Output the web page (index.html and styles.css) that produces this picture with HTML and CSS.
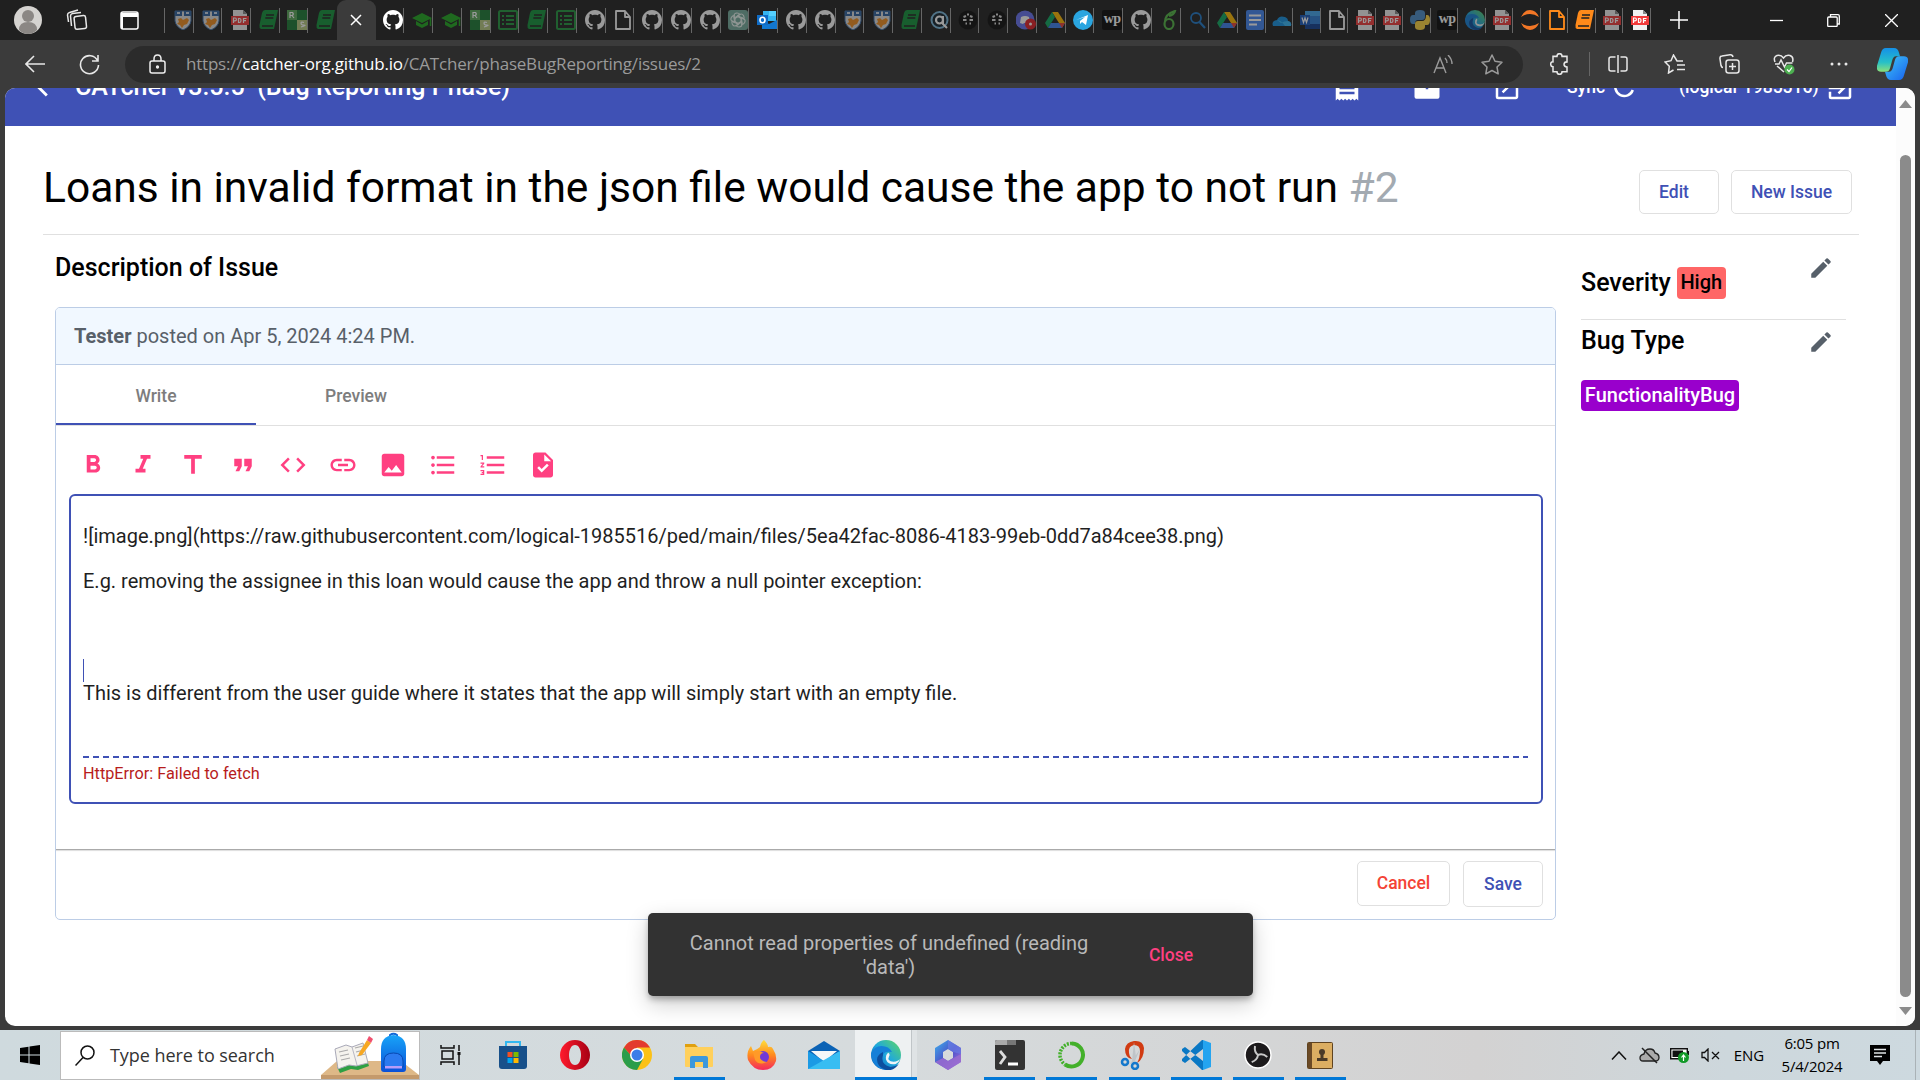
FILE: index.html
```html
<!DOCTYPE html>
<html lang="en">
<head>
<meta charset="utf-8">
<title>CATcher</title>
<link rel="stylesheet" href="styles.css">
</head>
<body>
<svg class="defs" width="0" height="0">
  <defs>
    <linearGradient id="gEdge" x1="0" y1="1" x2="1" y2="0"><stop offset="0" stop-color="#0b5cb5"/><stop offset=".5" stop-color="#1fa8dd"/><stop offset="1" stop-color="#5fd860"/></linearGradient>
    <linearGradient id="gCop1" x1="0" y1="0" x2="0" y2="1"><stop offset="0" stop-color="#1590e8"/><stop offset=".6" stop-color="#26c0c8"/><stop offset="1" stop-color="#8ae07a"/></linearGradient>
    <linearGradient id="gCop2" x1="0" y1="0" x2="1" y2="1"><stop offset="0" stop-color="#3fc8f8"/><stop offset="1" stop-color="#1860ee"/></linearGradient>
    <linearGradient id="g365" x1="0" y1="0" x2="1" y2="1"><stop offset="0" stop-color="#3fb4ee"/><stop offset=".5" stop-color="#4a50c8"/><stop offset="1" stop-color="#b07ae0"/></linearGradient>
    <linearGradient id="gFox" x1="0" y1="0" x2="0" y2="1"><stop offset="0" stop-color="#ffde3c"/><stop offset=".5" stop-color="#ff8a1e"/><stop offset="1" stop-color="#f5295c"/></linearGradient>
    <linearGradient id="gOpera" x1="0" y1="0" x2="1" y2="0"><stop offset="0" stop-color="#ff1b2d"/><stop offset="1" stop-color="#a70014"/></linearGradient>
    <linearGradient id="gBag" x1="0" y1="0" x2="0" y2="1"><stop offset="0" stop-color="#18a4f8"/><stop offset="1" stop-color="#0a50d8"/></linearGradient>
  </defs>
  <symbol id="gh" viewBox="0 0 16 16"><path d="M8 0C3.58 0 0 3.58 0 8c0 3.54 2.29 6.53 5.47 7.59.4.07.55-.17.55-.38 0-.19-.01-.82-.01-1.49-2.01.37-2.53-.49-2.69-.94-.09-.23-.48-.94-.82-1.13-.28-.15-.68-.52-.01-.53.63-.01 1.08.58 1.23.82.72 1.21 1.87.87 2.33.66.07-.52.28-.87.51-1.07-1.78-.2-3.64-.89-3.64-3.95 0-.87.31-1.59.82-2.15-.08-.2-.36-1.02.08-2.12 0 0 .67-.21 2.2.82.64-.18 1.32-.27 2-.27s1.36.09 2 .27c1.53-1.04 2.2-.82 2.2-.82.44 1.1.16 1.92.08 2.12.51.56.82 1.27.82 2.15 0 3.07-1.87 3.75-3.65 3.95.29.25.54.73.54 1.48 0 1.07-.01 1.93-.01 2.2 0 .21.15.46.55.38A8.01 8.01 0 0 0 16 8c0-4.42-3.58-8-8-8z" fill="#fff"/></symbol>
  <symbol id="crest" viewBox="0 0 20 20"><path d="M2 1h16v10q-1 6-8 9-7-3-8-9z" fill="#ddd"/><path d="M2 1h7v5H2zM11 1h7v5h-7z" fill="#2b5f9c"/><path d="M4 3h3M13 3h3" stroke="#fff" stroke-width="1.5"/><path d="M5 9l3-1 2 2 4-2 2 2-2 4-3 1-2 3-2-3-3-1 2-2z" fill="#f08c1e"/><path d="M2 1h16v10q-1 6-8 9-7-3-8-9z" fill="none" stroke="#3a6ca5"/></symbol>
  <symbol id="pdf" viewBox="0 0 20 20"><path d="M3 0h10l4 4v16H3z" fill="#f2f2f2"/><path d="M13 0v4h4z" fill="#888"/><path d="M1 6h18v9H1z" fill="#f23b3b"/><path d="M3.500 13V8h1.500a1.400 1.400 0 0 1 0 2.800H3.500M8.500 8.500v4h1q1.500 0 1.500-2t-1.500-2zM13.500 13V8.500h3M13.500 10.700h2.500" fill="none" stroke="#fff" stroke-width="1.200"/></symbol>
  <symbol id="book" viewBox="0 0 20 20"><path d="M6 0h13l-4 19H2q-2-1-1.500-4L3 3q.8-3 3-3z" fill="currentColor"/><path d="M7 5h8M6.300 8h8M3 16h11" stroke="#222" stroke-width="1.400"/></symbol>
  <symbol id="rs" viewBox="0 0 20 20"><path d="M0 0h10v10H0z" fill="#5aa85a"/><path d="M10 0h10v10H10z" fill="#1c7a34"/><path d="M0 10h10v10H0z" fill="#1c7a34"/><path d="M10 10h10v10H10z" fill="#b5c880"/><path d="M3 8V2.500h2.500q1.500 1.500 0 3H3M5 5.500L7 8M17 12.500q-3-1-3 .8t3 1.800-3 1.900" fill="none" stroke="#fff" stroke-width="1.200"/></symbol>
  <symbol id="grad" viewBox="0 0 20 20"><path d="M0 8l10-5 10 5-10 5zM4 11l6 3.500L16 11v4l-6 3-6-3z" fill="#1fa51f"/><path d="M18.500 8v8" stroke="#1fa51f" stroke-width="1.500"/></symbol>
  <symbol id="list" viewBox="0 0 20 20"><rect x="1" y="1" width="18" height="18" rx="1.500" fill="none" stroke="#21963e" stroke-width="2"/><path d="M4 6h2M8 6h8M4 10h2M8 10h8M4 14h2M8 14h8" stroke="#21963e" stroke-width="1.800"/></symbol>
  <symbol id="file" viewBox="0 0 20 20"><path d="M3 1h9l5 6v12H3zM12 1v6h5" fill="none" stroke="currentColor" stroke-width="1.800" stroke-linejoin="round"/></symbol>
  <symbol id="gpt" viewBox="0 0 20 20"><rect width="20" height="20" rx="3" fill="#74aa9c"/><g fill="none" stroke="#e8f5f0" stroke-width="1.100"><path d="M6 8.500V6q0-3 3-3 2 0 3 1.500L7 7.500V12"/><path d="M6 8.500V6q0-3 3-3 2 0 3 1.500L7 7.500V12" transform="rotate(60 10 10)"/><path d="M6 8.500V6q0-3 3-3 2 0 3 1.500L7 7.500V12" transform="rotate(120 10 10)"/><path d="M6 8.500V6q0-3 3-3 2 0 3 1.500L7 7.500V12" transform="rotate(180 10 10)"/><path d="M6 8.500V6q0-3 3-3 2 0 3 1.500L7 7.500V12" transform="rotate(240 10 10)"/><path d="M6 8.500V6q0-3 3-3 2 0 3 1.500L7 7.500V12" transform="rotate(300 10 10)"/></g></symbol>
  <symbol id="outlook" viewBox="0 0 20 20"><path d="M6 1h13v10H6z" fill="#35b4f0"/><path d="M12 1h7v5h-7z" fill="#55d0ff"/><path d="M5 10l7 4 8-4v9H5z" fill="#1277cf"/><path d="M0 5h11v10H0z" fill="#0f6cc6"/><ellipse cx="5.500" cy="10" rx="2.500" ry="2.800" fill="none" stroke="#fff" stroke-width="1.600"/></symbol>
  <symbol id="aq" viewBox="0 0 20 20"><circle cx="9.500" cy="10" r="8" fill="#10202c" stroke="#7ab8dc" stroke-width="2"/><circle cx="9.500" cy="10" r="3.500" fill="none" stroke="#fff" stroke-width="2.200"/><path d="M13 6v8l4 4" stroke="#fff" stroke-width="2" fill="none"/></symbol>
  <symbol id="dark" viewBox="0 0 20 20"><circle cx="10" cy="10" r="9.500" fill="#0c0c0c"/><path d="M5.500 7l2.500-1m4 0l2.500 1M5 10h3.500m3 0H15M7.500 13.500h1.500m2.500 0H13M9 4.500h2" stroke="#ddd" stroke-width="2"/></symbol>
  <symbol id="discord" viewBox="0 0 20 20"><circle cx="9" cy="10" r="9.500" fill="#6671f0"/><path d="M5 7q4-2 8 0l1 6-3 1-1-1H8l-1 1-3-1z" fill="#fff"/><circle cx="14.500" cy="14" r="5.500" fill="#e21f26"/><circle cx="14.500" cy="14" r="1.500" fill="#fff"/></symbol>
  <symbol id="drive" viewBox="0 0 20 20"><path d="M7 2h6l7 11h-6z" fill="#ffba00"/><path d="M7 2l3 5-7 11-3-5z" fill="#0da960"/><path d="M6 13h14l-3 5H3z" fill="#3d7ff0"/><path d="M14 13h6l-3 5z" fill="#ea4335"/></symbol>
  <symbol id="tg" viewBox="0 0 20 20"><circle cx="10" cy="10" r="10" fill="#2aa5e0"/><path d="M3 10l12-5-2 10-4-3-2 2v-3l5-4" fill="#fff"/></symbol>
  <symbol id="onedrive" viewBox="0 0 20 20"><path d="M1 16q-2-5 4-6 2-5 8-3 3 1 3 4 4 1 3 5z" fill="#1490df"/><path d="M5 10q4 0 8 6h6q1-4-3-5-4 0-7 2z" fill="#35b5f5"/></symbol>
  <symbol id="search" viewBox="0 0 20 20"><circle cx="8" cy="8" r="5" fill="none" stroke="currentColor" stroke-width="1.800"/><path d="M11.500 12L17 18" stroke="currentColor" stroke-width="2.200"/></symbol>
  <symbol id="leaf" viewBox="0 0 20 20"><ellipse cx="9" cy="14" rx="4.500" ry="5" fill="none" stroke="#52b545" stroke-width="2.200"/><path d="M5 12Q5 4 15 1q-1 4-6 5" fill="none" stroke="#52b545" stroke-width="2.200"/></symbol>
  <symbol id="doc" viewBox="0 0 20 20"><rect x="1" width="18" height="20" rx="2" fill="#4285f4"/><path d="M4 5.500h12M4 10h12M4 14.500h8" stroke="#fff" stroke-width="1.800"/></symbol>
  <symbol id="word" viewBox="0 0 20 20"><path d="M5 1h15v18H5z" fill="#2b7cd3"/><path d="M5 1h15v5H5z" fill="#41a5ee"/><path d="M5 14h15v5H5z" fill="#103f91"/><path d="M0 5h10v10H0z" fill="#185abd"/><path d="M2 7.500l1.500 5L5 8l1.500 4.500 1.500-5" fill="none" stroke="#fff" stroke-width="1.200"/></symbol>
  <symbol id="py" viewBox="0 0 20 20"><path d="M5 9V3q0-3 5-3t5 3v4q0 3-3 3H8q-3 0-3 4H3q-3 0-3-4.500T3 5h7" fill="#4a8cc8"/><path d="M15 11v6q0 3-5 3t-5-3v-3q0-3 3-3h4q4 0 4-6h1q3 0 3 5t-3 5h-7" fill="#ffd540"/></symbol>
  <symbol id="edge" viewBox="0 0 20 20"><circle cx="10" cy="10" r="10" fill="url(#gEdge)"/><path d="M0 9q2-5 7-5 5 0 7 4-5-1-6 2-2 6 4 10Q1 20 0 9z" fill="#1580d8"/><path d="M8 10q-2 6 5 8 3 0 5.500-2Q15 21 10 20 4 18 4 13q0-3 4-5z" fill="#0d4f9e"/><path d="M11.500 8.500q1.500 1 .5 2.500-1.500 3 3 3.500 3 0 5-2.500-1.500 3-3.500 4-5 1-6.500-3-.5-3 1.500-4.500z" fill="#eef4f8"/></symbol>
  <symbol id="jup" viewBox="0 0 20 20"><path d="M1 7Q4 0 10 0t9 7q-9-6-18 0zM1 13q3 7 9 7t9-7q-9 6-18 0z" fill="#f37726"/></symbol>
  <symbol id="pencil" viewBox="0 0 24 24"><path d="M3 17.250V21h3.750L17.810 9.940l-3.750-3.750L3 17.250zM20.710 7.040a.996.996 0 0 0 0-1.410l-2.340-2.340a.996.996 0 0 0-1.410 0l-1.830 1.830 3.750 3.750 1.830-1.830z" fill="#57606a"/></symbol>
</svg>

<div class="screen">
  <header class="tabstrip">
    <div class="slot w56 lead"><svg width="28" height="28" viewBox="0 0 28 28"><circle cx="14" cy="14" r="14" fill="#d5d3d0"/><circle cx="14" cy="10" r="6" fill="#8b8784"/><path d="M5 24q0-8 9-8t9 8q-4 4-9 4t-9-4z" fill="#8b8784"/></svg></div>
    <div class="slot w48"><svg width="22" height="22" viewBox="0 0 22 22" fill="none" stroke="#e8e8e8" stroke-width="1.500"><rect x="8.500" y="7" width="11.500" height="13" rx="2" transform="rotate(-6 14 13)"/><path d="M5.500 17L4.500 7q0-2 2-2.500L15 3.500M2.500 13L1.500 6q0-2 2-2.500L12 1"/></svg></div>
    <div class="slot w56"><svg width="19" height="19" viewBox="0 0 19 19"><rect x="1" y="1" width="17" height="17" rx="2" fill="none" stroke="#fff" stroke-width="1.500"/><path d="M1 2h17v4H1zM1 6h2v12H1z" fill="#fff"/></svg></div>
    <div class="tabs first">
      <div class="tab"><svg><use href="#crest"/></svg></div>
      <div class="tab"><svg><use href="#crest"/></svg></div>
      <div class="tab"><svg><use href="#pdf"/></svg></div>
      <div class="tab green"><svg><use href="#book"/></svg></div>
      <div class="tab"><svg><use href="#rs"/></svg></div>
      <div class="tab green bare"><svg><use href="#book"/></svg></div>
    </div>
    <div class="active"><svg width="12" height="12" viewBox="0 0 12 12"><path d="M1 1l10 10M11 1L1 11" stroke="#fff" stroke-width="1.500"/></svg></div>
    <div class="tabs">
      <div class="tab on"><svg><use href="#gh"/></svg></div>
      <div class="tab"><svg><use href="#grad"/></svg></div>
      <div class="tab"><svg><use href="#grad"/></svg></div>
      <div class="tab"><svg><use href="#rs"/></svg></div>
      <div class="tab"><svg><use href="#list"/></svg></div>
      <div class="tab green"><svg><use href="#book"/></svg></div>
      <div class="tab"><svg><use href="#list"/></svg></div>
      <div class="tab"><svg><use href="#gh"/></svg></div>
      <div class="tab"><svg><use href="#file"/></svg></div>
      <div class="tab"><svg><use href="#gh"/></svg></div>
      <div class="tab"><svg><use href="#gh"/></svg></div>
      <div class="tab"><svg><use href="#gh"/></svg></div>
      <div class="tab"><svg><use href="#gpt"/></svg></div>
      <div class="tab on"><svg><use href="#outlook"/></svg></div>
      <div class="tab"><svg><use href="#gh"/></svg></div>
      <div class="tab"><svg><use href="#gh"/></svg></div>
      <div class="tab"><svg><use href="#crest"/></svg></div>
      <div class="tab"><svg><use href="#crest"/></svg></div>
      <div class="tab green"><svg><use href="#book"/></svg></div>
      <div class="tab"><svg><use href="#aq"/></svg></div>
      <div class="tab"><svg><use href="#dark"/></svg></div>
      <div class="tab"><svg><use href="#dark"/></svg></div>
      <div class="tab"><svg><use href="#discord"/></svg></div>
      <div class="tab"><svg><use href="#drive"/></svg></div>
      <div class="tab on"><svg><use href="#tg"/></svg></div>
      <div class="tab"><span class="wp">wp</span></div>
      <div class="tab"><svg><use href="#gh"/></svg></div>
      <div class="tab"><svg><use href="#leaf"/></svg></div>
      <div class="tab blue"><svg><use href="#search"/></svg></div>
      <div class="tab"><svg><use href="#drive"/></svg></div>
    </div>
    <div class="tabs narrow">
      <div class="tab"><svg><use href="#doc"/></svg></div>
      <div class="tab"><svg><use href="#onedrive"/></svg></div>
      <div class="tab"><svg><use href="#word"/></svg></div>
      <div class="tab"><svg><use href="#file"/></svg></div>
      <div class="tab"><svg><use href="#pdf"/></svg></div>
      <div class="tab"><svg><use href="#pdf"/></svg></div>
      <div class="tab"><svg><use href="#py"/></svg></div>
      <div class="tab"><span class="wp">wp</span></div>
      <div class="tab"><svg><use href="#edge"/></svg></div>
      <div class="tab"><svg><use href="#pdf"/></svg></div>
      <div class="tab on"><svg><use href="#jup"/></svg></div>
      <div class="tab on orange"><svg><use href="#file"/></svg></div>
      <div class="tab on orange"><svg><use href="#book"/></svg></div>
      <div class="tab"><svg><use href="#pdf"/></svg></div>
      <div class="tab on"><svg><use href="#pdf"/></svg></div>
    </div>
    <div class="slot w56"><svg width="18" height="18" viewBox="0 0 18 18"><path d="M9 0v18M0 9h18" stroke="#fff" stroke-width="1.500"/></svg></div>
    <div class="winctl">
      <div class="slot w57"><svg width="13" height="13" viewBox="0 0 13 13"><path d="M0 6.500h13" stroke="#fff" stroke-width="1.300"/></svg></div>
      <div class="slot w57"><svg width="13" height="13" viewBox="0 0 13 13" fill="none" stroke="#fff" stroke-width="1.300"><rect x=".7" y="3" width="9.500" height="9.500" rx="1"/><path d="M3.500 3V.700H11q1.300 0 1.300 1.300v8H10"/></svg></div>
      <div class="slot w57"><svg width="13" height="13" viewBox="0 0 13 13"><path d="M0 0l13 13M13 0L0 13" stroke="#fff" stroke-width="1.300"/></svg></div>
    </div>
  </header>

  <div class="navbar">
    <div class="slot w55 lead7"><svg width="20" height="18" viewBox="0 0 20 18" fill="none" stroke="#e8e8e8" stroke-width="1.600"><path d="M20 9H1M9 1L1 9l8 8"/></svg></div>
    <div class="slot w55"><svg width="21" height="21" viewBox="0 0 21 21" fill="none" stroke="#e8e8e8" stroke-width="1.600"><path d="M18.500 6.500A9 9 0 1 0 19.500 11M19 1v6h-6"/></svg></div>
    <div class="address">
      <svg width="17" height="20" viewBox="0 0 17 20" fill="none" stroke="#eee" stroke-width="1.500"><rect x="1" y="7" width="15" height="12" rx="2"/><path d="M5 7V5q0-4 3.500-4T12 5v2"/><circle cx="8.500" cy="13" r=".9" fill="#eee"/></svg>
      <span class="url">https://<b>catcher-org.github.io</b>/CATcher/phaseBugReporting/issues/2</span>
      <svg class="read" width="20" height="19" viewBox="0 0 20 19" fill="none" stroke="#9a9a9a" stroke-width="1.400"><path d="M1 18L7 3l6 15M3 13h8M12 3q2 2 2 5M15 0q4 4 4 9"/></svg>
      <svg width="22" height="21" viewBox="0 0 22 21" fill="none" stroke="#9a9a9a" stroke-width="1.500" stroke-linejoin="round"><path d="M11 1l3 6.300 7 .9-5 4.800 1.200 6.800L11 16.500l-6.200 3.300L6 13 1 8.200l7-.9z"/></svg>
    </div>
    <div class="navicons">
      <div class="slot w55"><svg width="20" height="22" viewBox="0 0 20 20" preserveAspectRatio="none" fill="none" stroke="#e8e8e8" stroke-width="1.500"><path d="M3 3h4q0-2.300 2.500-2.300T12 3h5v5q-3 0-3 2.300t3 2.400V17h-5q0 2.300-2.500 2.300T7 17H3v-4.500q-2.300 0-2.300-2.300T3 8z"/></svg></div>
      <i class="vline"></i>
      <div class="slot w56"><svg width="20" height="18" viewBox="0 0 20 18" fill="none" stroke="#e8e8e8" stroke-width="1.500"><path d="M7.500 2H3Q1 2 1 4v10q0 2 2 2h4.500M12.500 2H17q2 0 2 2v10q0 2-2 2h-4.500M10 0v18"/></svg></div>
      <div class="slot w56"><svg width="21" height="20" viewBox="0 0 21 20" fill="none" stroke="#e8e8e8" stroke-width="1.500"><path d="M19 7h-6L9.500 1 7 6.700 1 8l4.300 4.300L4.500 19 9.500 16M13 11h8M13 15.500h8"/></svg></div>
      <div class="slot w55"><svg width="21" height="20" viewBox="0 0 21 20" fill="none" stroke="#e8e8e8" stroke-width="1.500"><rect x="7" y="6" width="13" height="13" rx="2.500"/><path d="M13.500 9v7M10 12.500h7M4 13.500q-1.500 0-2-2L1 5q-.3-3 2-3l8-1.200q2.500-.3 3 2.200"/></svg></div>
      <div class="slot w54"><svg width="22" height="21" viewBox="0 0 22 21" fill="none" stroke="#e8e8e8" stroke-width="1.500"><path d="M2 8Q0 3 4 1.500 8 .5 10.500 4 13 .5 17 1.500 21 3 19.500 8M2 10h4l2-4 3.500 7 2-4h6M4 12l7 6"/><circle cx="16.500" cy="15.500" r="5" fill="#4caf50" stroke="none"/><path d="M14 15.500l2 2 3-4" stroke="#fff" stroke-width="1.200"/></svg></div>
      <div class="slot w55"><svg width="18" height="4" viewBox="0 0 18 4" fill="#e8e8e8"><circle cx="2" cy="2" r="1.500"/><circle cx="9" cy="2" r="1.500"/><circle cx="16" cy="2" r="1.500"/></svg></div>
      <div class="slot w53"><svg width="31" height="32" viewBox="0 0 31 27" preserveAspectRatio="none"><path d="M9 0h8q4 0 5 4l1 3h-4q-3 0-4 4l-2 6q-1 3-4 3H4q-5 0-4-5L4 4q1-4 5-4z" fill="url(#gCop1)"/><path d="M22 27h-8q-4 0-5-4l-1-3h4q3 0 4-4l2-6q1-3 4-3h5q5 0 4 5l-4 11q-1 4-5 4z" fill="url(#gCop2)"/></svg></div>
    </div>
  </div>

  <main class="viewport">
    <div class="app">
      <div class="appbar">
        <svg class="chev" width="34" height="34" viewBox="0 0 24 24" fill="#fff"><path d="M15.410 7.410L14 6l-6 6 6 6 1.410-1.410L10.830 12z"/></svg>
        <span class="brand">CATcher v3.5.5&nbsp; (Bug Reporting Phase)</span>
        <div class="slot w80"><svg width="30" height="30" viewBox="0 0 24 24" fill="#fff"><path d="M18 17H6v-2h12v2zm0-4H6v-2h12v2zm0-4H6V7h12v2zM3 22l1.500-1.500L6 22l1.500-1.500L9 22l1.500-1.500L12 22l1.500-1.500L15 22l1.500-1.500L18 22l1.500-1.500L21 22V2l-1.500 1.500L18 2l-1.500 1.500L15 2l-1.500 1.500L12 2l-1.500 1.500L9 2 7.500 3.500 6 2 4.500 3.500 3 2v20z"/></svg></div>
        <div class="slot w80"><svg width="30" height="30" viewBox="0 0 24 24" fill="#fff"><path d="M20 6h-4V4q0-2-2-2h-4Q8 2 8 4v2H4L2 8v11q0 1.500 1.500 1.500h17q1.500 0 1.500-1.500V8zm-6 0h-4V4h4zm-1 7h-2v-2h2z"/></svg></div>
        <div class="slot w80"><svg width="30" height="30" viewBox="0 0 24 24" fill="#fff"><path d="M19 19H5V5h7V3H5a2 2 0 0 0-2 2v14a2 2 0 0 0 2 2h14c1.100 0 2-.9 2-2v-7h-2v7zM14 3v2h3.590l-9.830 9.830 1.410 1.410L19 6.410V10h2V3h-7z"/></svg></div>
        <span class="sync">Sync</span>
        <svg class="ring" width="24" height="24" viewBox="0 0 24 24" fill="none" stroke="#fff" stroke-width="2.500"><path d="M18 4A9 9 0 1 0 20.800 14"/></svg>
        <span class="user">(logical-1985516)</span>
        <svg width="30" height="30" viewBox="0 0 24 24" fill="#fff"><path d="M10.090 15.590L11.500 17l5-5-5-5-1.410 1.410L12.670 11H3v2h9.670l-2.580 2.590zM19 3H5a2 2 0 0 0-2 2v4h2V5h14v14H5v-4H3v4a2 2 0 0 0 2 2h14c1.100 0 2-.9 2-2V5a2 2 0 0 0-2-2z"/></svg>
      </div>

      <div class="titlebar">
        <h1>Loans in invalid format in the json file would cause the app to not run <span>#2</span></h1>
        <button class="btn edit">Edit</button>
        <button class="btn new">New Issue</button>
      </div>

      <div class="columns">
        <section class="issue">
          <h2>Description of Issue</h2>
          <div class="card">
            <div class="cardhead"><b>Tester</b> posted on Apr 5, 2024 4:24 PM.</div>
            <div class="mdtabs"><div class="mdtab sel">Write</div><div class="mdtab">Preview</div></div>
            <div class="tools">
              <svg viewBox="0 0 24 24"><path d="M15.600 10.790c.97-.67 1.650-1.770 1.650-2.790 0-2.260-1.750-4-4-4H7v14h7.040c2.090 0 3.710-1.700 3.710-3.790 0-1.520-.86-2.820-2.150-3.420zM10 6.500h3c.83 0 1.500.67 1.500 1.500s-.67 1.500-1.500 1.500h-3v-3zm3.500 9H10v-3h3.500c.83 0 1.500.67 1.500 1.500s-.67 1.500-1.500 1.500z"/></svg>
              <svg viewBox="0 0 24 24"><path d="M10 4v3h2.210l-3.420 8H6v3h8v-3h-2.210l3.420-8H18V4z"/></svg>
              <svg viewBox="0 0 24 24"><path d="M5 4v3h5.500v12h3V7H19V4z"/></svg>
              <svg viewBox="0 0 24 24"><path d="M6 17h3l2-4V7H5v6h3zm8 0h3l2-4V7h-6v6h3z"/></svg>
              <svg viewBox="0 0 24 24"><path d="M9.400 16.600L4.800 12l4.600-4.600L8 6l-6 6 6 6 1.400-1.400zm5.200 0l4.600-4.600-4.600-4.600L16 6l6 6-6 6-1.400-1.400z"/></svg>
              <svg viewBox="0 0 24 24"><path d="M3.900 12c0-1.710 1.390-3.100 3.100-3.100h4V7H7c-2.760 0-5 2.240-5 5s2.240 5 5 5h4v-1.900H7c-1.710 0-3.100-1.390-3.100-3.100zM8 13h8v-2H8v2zm9-6h-4v1.900h4c1.710 0 3.100 1.390 3.100 3.100s-1.390 3.100-3.100 3.100h-4V17h4c2.760 0 5-2.240 5-5s-2.240-5-5-5z"/></svg>
              <svg viewBox="0 0 24 24"><path d="M21 19V5c0-1.100-.9-2-2-2H5c-1.100 0-2 .9-2 2v14c0 1.100.9 2 2 2h14c1.100 0 2-.9 2-2zM8.500 13.500l2.500 3.010L14.500 12l4.500 6H5l3.500-4.500z"/></svg>
              <svg viewBox="0 0 24 24"><path d="M4 10.500c-.83 0-1.500.67-1.500 1.500s.67 1.500 1.500 1.500 1.500-.67 1.500-1.500-.67-1.500-1.500-1.500zm0-6c-.83 0-1.500.67-1.500 1.500S3.170 7.500 4 7.500 5.500 6.830 5.500 6 4.830 4.500 4 4.500zm0 12c-.83 0-1.500.68-1.500 1.500s.68 1.500 1.500 1.500 1.500-.68 1.500-1.500-.67-1.500-1.500-1.500zM7 19h14v-2H7v2zm0-6h14v-2H7v2zm0-8v2h14V5H7z"/></svg>
              <svg viewBox="0 0 24 24"><path d="M2 17h2v.5H3v1h1v.5H2v1h3v-4H2v1zm1-9h1V4H2v1h1v3zm-1 3h1.800L2 13.100v.9h3v-1H3.200L5 10.900V10H2v1zm5-6v2h14V5H7zm0 14h14v-2H7v2zm0-6h14v-2H7v2z"/></svg>
              <svg viewBox="0 0 24 24"><path d="M14 2H6c-1.100 0-2 .9-2 2v16c0 1.100.9 2 2 2h12c1.100 0 2-.9 2-2V8l-6-6zm-3.060 16L7.400 14.460l1.410-1.410 2.120 2.120 4.240-4.240 1.410 1.410L10.940 18zM13 9V3.500L18.500 9H13z"/></svg>
            </div>
            <div class="editor">
              <div class="text"><p>![image.png](https://raw.githubusercontent.com/logical-1985516/ped/main/files/5ea42fac-8086-4183-99eb-0dd7a84cee38.png)</p><p></p><p>E.g. removing the assignee in this loan would cause the app and throw a null pointer exception:</p><p></p><p></p><p></p><p class="caret"></p><p>This is different from the user guide where it states that the app will simply start with an empty file.</p></div>
              <div class="dash"></div>
              <div class="err">HttpError: Failed to fetch</div>
            </div>
            <div class="actions"><button class="btn cancel">Cancel</button><button class="btn save">Save</button></div>
          </div>
        </section>
        <aside>
          <div class="severity"><h3>Severity</h3><span class="chip high">High</span><svg><use href="#pencil"/></svg></div>
          <div class="bugtype"><h3>Bug Type</h3><svg><use href="#pencil"/></svg></div>
          <span class="chip func">FunctionalityBug</span>
        </aside>
      </div>
    </div>
    <div class="scrollbar">
      <svg width="13" height="8" viewBox="0 0 13 8"><path d="M6.500 0L13 8H0z" fill="#8b8b8b"/></svg>
      <div class="thumb"></div>
      <svg width="13" height="8" viewBox="0 0 13 8"><path d="M6.500 8L13 0H0z" fill="#8b8b8b"/></svg>
    </div>
    <div class="snack"><p>Cannot read properties of undefined (reading 'data')</p><b>Close</b></div>
  </main>

  <footer class="taskbar">
    <div class="slot w60"><svg width="20" height="20" viewBox="0 0 20 20"><path d="M0 3l8.500-1.200v7.700H0zM9.500 1.600L20 0v9.500H9.500zM0 10.500h8.500v7.700L0 17zM9.500 10.500H20V20L9.500 18.400z"/></svg></div>
    <div class="find">
      <svg width="20" height="21" viewBox="0 0 20 21" fill="none" stroke="#111" stroke-width="1.500"><circle cx="12.500" cy="7.500" r="6.500"/><path d="M8 12.500L.5 20.500"/></svg>
      <span>Type here to search</span>
      <svg class="art" width="98" height="48" viewBox="0 0 98 48"><path d="M16 30h64l18 14v4H0v-4z" fill="#deb887"/><path d="M0 44h98v4H0z" fill="#c49a6c"/><path d="M16 36l3 6 11-4 7 1 11-4-2-6z" fill="#2ea043"/><path d="M14 18l11-4 6 2 11-4 5 20-12 3-7-1-11 4z" fill="#f5f3ee" stroke="#a9a9b8"/><path d="M31 16l5 18" stroke="#b8b8c4"/><path d="M18 21l9-2m-8 6l9-2m-8 6l9-2m5-10l8-2m-7 6l8-2m-7 6l8-2" stroke="#aaa" stroke-width="1.200"/><path d="M38 22l8-13 4 3-9 12-4 1z" fill="#f7a823"/><path d="M46 9l2-4 4 3-2 4z" fill="#f0506e"/><path d="M69 6V4q3.500-2.500 7 0v2" fill="none" stroke="#1268d8" stroke-width="2"/><path d="M60 18q0-13 12.500-14Q85 5 85 18v20q0 3-3 3H63q-3 0-3-3z" fill="url(#gBag)"/><path d="M63 30q0-8 9.500-8t9.500 8v6H63z" fill="#2b7af0" stroke="#0848b0"/><path d="M64 35h17v2.500H64z" fill="#b89cf8"/></svg>
    </div>
    <div class="apps">
      <div class="app-ic"><svg width="22" height="20" viewBox="0 0 22 20" fill="none" stroke="#111" stroke-width="1.500"><path d="M1 0v3h13V0M1 20v-3h13v3M2 6h11v8H2zM19 0v6M19 10v10"/><path d="M17.500 7h3v3h-3z" fill="#111" stroke="none"/></svg></div>
      <div class="app-ic"><svg width="30" height="30" viewBox="0 0 30 30"><path d="M8 7V2h14v5" fill="none" stroke="#32b8f0" stroke-width="2"/><path d="M1 6h28v20q0 3-3 3H4q-3 0-3-3z" fill="#17508a"/><path d="M9.500 12h5v5h-5z" fill="#f25022"/><path d="M15.500 12h5v5h-5z" fill="#7fba00"/><path d="M9.500 18h5v5h-5z" fill="#00a4ef"/><path d="M15.500 18h5v5h-5z" fill="#ffb900"/></svg></div>
      <div class="app-ic"><svg width="30" height="30" viewBox="0 0 30 30"><path d="M15 0a15 15 0 1 0 0 30 15 15 0 1 0 0-30zm0 5c4 0 6 5 6 10s-2 10-6 10-6-5-6-10 2-10 6-10z" fill="url(#gOpera)"/></svg></div>
      <div class="app-ic"><svg width="30" height="30" viewBox="0 0 30 30"><circle cx="15" cy="15" r="15" fill="#fbc116"/><path d="M2 7.500A15 15 0 0 1 28 7.500H15L10 17z" fill="#e33b2e"/><path d="M2 7.500A15 15 0 0 0 15 30l6-11-10-1z" fill="#2a9d4a"/><circle cx="15" cy="15" r="7" fill="#fff"/><circle cx="15" cy="15" r="5.500" fill="#3c7de8"/></svg></div>
      <div class="app-ic run"><svg width="28" height="26" viewBox="0 0 28 26"><path d="M0 2h10l3 3h-3v4H0z" fill="#e0a010"/><path d="M0 5h28v19q0 1-1 1H1q-1 0-1-1z" fill="#ffd05c"/><path d="M5 26V16q0-2 2-2h14q2 0 2 2v10h-5v-6h-8v6z" fill="#3c98dc"/></svg></div>
      <div class="app-ic"><svg width="30" height="30" viewBox="0 0 30 30"><path d="M17 0q4 4 4 7 4-1 5 2 4 6 3 12-3 9-13 9T1 20Q-1 12 4 6l2 5q5-2 7-4 1-5 4-7z" fill="url(#gFox)"/><circle cx="16" cy="17" r="6" fill="#7139d8"/><path d="M6 12q6-2 11 1-4 0-4 4t7 5q-8 4-12-2z" fill="#ff9a28"/></svg></div>
      <div class="app-ic"><svg width="32" height="30" viewBox="0 0 32 30"><path d="M0 11L16 1l16 10v18H0z" fill="#0b62b5"/><path d="M3 11h26L16 22z" fill="#f5f7f9"/><path d="M0 11l16 10 16-10v18H0z" fill="#1b9ae5"/><path d="M32 29H0L32 11z" fill="#38bdf2"/></svg></div>
      <div class="app-ic current"><svg width="30" height="30"><use href="#edge"/></svg></div>
      <div class="app-ic"><svg width="28" height="30" viewBox="0 0 28 30"><path d="M14 0l13 8v14l-13 8L1 22V8zm0 9l-5 3v6l5 3 5-3v-6z" fill="url(#g365)" fill-rule="evenodd"/><path d="M1 22l8-4 5 3 13-7v8l-13 8z" fill="#9a6cd0" opacity=".85"/><path d="M14 0l13 8v6l-8-2-5-3z" fill="#6a7ce4" opacity=".7"/></svg></div>
      <div class="app-ic run"><svg width="30" height="30" viewBox="0 0 30 30"><rect width="30" height="30" rx="2" fill="#333"/><path d="M0 5V2q0-2 2-2h10v5z" fill="#aaa"/><path d="M12 0h9v5h-9z" fill="#777"/><path d="M5 11l5 6-5 7" fill="none" stroke="#ddd" stroke-width="2.800"/><path d="M13 24h10" stroke="#fff" stroke-width="3"/></svg></div>
      <div class="app-ic run"><svg width="28" height="28" viewBox="0 0 28 28" fill="none" stroke="#43b02a"><path d="M14 2.500a11.500 11.500 0 1 1-7 21" stroke-width="4"/><path d="M14 2.500a11.500 11.500 0 0 0-7 21" stroke-width="3.500" stroke-dasharray="2 1.200"/></svg></div>
      <div class="app-ic run"><svg width="28" height="30" viewBox="0 0 28 30"><path d="M5 9q1-7 9-8 9-1 10 7 0 11-7 15 3-5 3-12 0-6-6-6-6 1-5 8 0 3 3 6-7-1-7-10z" fill="#d13b12"/><path d="M14 2l2 15-4 4zM20 9l-5 12-5 3z" fill="#bfc4c8"/><circle cx="5" cy="22" r="3" fill="none" stroke="#1478cc" stroke-width="2.500"/><circle cx="15" cy="26" r="3" fill="none" stroke="#1478cc" stroke-width="2.500"/></svg></div>
      <div class="app-ic run"><svg width="30" height="30" viewBox="0 0 30 30"><path d="M22 0l8 3v24l-8 3z" fill="#24a4f0"/><path d="M22 0v9L4 23l-3-2v-2L21 0zM22 30v-9L4 7 1 9v2l20 19z" fill="#0a78c4"/></svg></div>
      <div class="app-ic run"><svg width="28" height="28" viewBox="0 0 28 28"><circle cx="14" cy="14" r="13" fill="#1c1a1c" stroke="#fff" stroke-width="1.500"/><g fill="none" stroke="#c8c8c8" stroke-width="2"><path d="M14 14q-4-3-3-9"/><path d="M14 14q-4-3-3-9" transform="rotate(120 14 14)"/><path d="M14 14q-4-3-3-9" transform="rotate(240 14 14)"/></g></svg></div>
      <div class="app-ic run"><svg width="26" height="27" viewBox="0 0 26 27"><rect x=".5" y=".5" width="25" height="26" rx="1" fill="#dcae62" stroke="#5f4320"/><path d="M1 1h4v25H1z" fill="#6b4a26"/><circle cx="15" cy="10" r="3" fill="#4a3a28"/><path d="M13.500 12h3v4h4v3H10v-3h3.500z" fill="#4a3a28"/></svg></div>
    </div>
    <div class="tray">
      <div class="slot w30"><svg width="16" height="9" viewBox="0 0 16 9" fill="none" stroke="#111" stroke-width="1.500"><path d="M1 8.500l7-7.500 7 7.500"/></svg></div>
      <div class="slot w30"><svg width="21" height="17" viewBox="0 0 21 17"><path d="M4 14Q1 14 1 11t4-4q1-5 6-5 4 0 5 4 4 1 4 4.500T16 14z" fill="#aaa" stroke="#222" stroke-width="1.300"/><path d="M3 1l15 15" stroke="#222" stroke-width="1.500"/></svg></div>
      <div class="slot w32"><svg width="20" height="16" viewBox="0 0 20 16"><path d="M.7 1.700h16.600v10H.7z" fill="#fff" stroke="#111" stroke-width="1.400"/><path d="M2.500 3.500H13v6.500H2.500zM17.500 4H19v4h-1.500z" fill="#111"/><circle cx="13.500" cy="10.500" r="5.500" fill="#129a28"/><path d="M13.500 14V8m-2 2.500l2-2.500 2 2.500" fill="none" stroke="#fff" stroke-width="1.200"/></svg></div>
      <div class="slot w28"><svg width="19" height="14" viewBox="0 0 19 14" fill="none" stroke="#111" stroke-width="1.300"><path d="M1 4.500h2.500L7 1v12L3.500 9.500H1zM11 4l7 7M18 4l-7 7"/></svg></div>
      <span class="lang">ENG</span>
      <div class="clock"><span>6:05 pm</span><span>5/4/2024</span></div>
      <div class="slot note"><svg width="20" height="20" viewBox="0 0 20 20"><path d="M0 0h20v16h-7l-3 4-3-4H0z"/><path d="M4 4.500h12M4 8h12M4 11.500h8" stroke="#dfe3e5" stroke-width="1.300"/></svg></div>
    </div>
  </footer>
</div>
</body>
</html>
```
FILE: styles.css
```css
* { box-sizing: border-box; }
body { margin: 0; font-family: Roboto, sans-serif; }
h1, h2, h3, p { margin: 0; font-weight: 400; }
.defs { position: absolute; }
svg { display: block; flex: none; }
.screen { width: 1920px; height: 1080px; overflow: hidden; display: flex; flex-direction: column; background: #3b3b3b; }

.slot { display: flex; align-items: center; justify-content: center; flex: none; }
.w28 { width: 28px; } .w30 { width: 30px; } .w32 { width: 32px; } .w48 { width: 48px; } .w53 { width: 53px; } .w54 { width: 54px; }
.w55 { width: 55px; } .w56 { width: 56px; } .w57 { width: 57.500px; } .w60 { width: 60px; } .w80 { width: 80px; }

/* browser tab strip */
.tabstrip { height: 40px; flex: none; background: #202020; display: flex; align-items: center; }
.lead { margin-right: -3px; }
.tabs { display: flex; height: 40px; align-items: center; }
.tabs.first { margin-left: 7px; border-left: 0; }
.tabs.first::before { content: ""; width: 1px; height: 25px; background: #666; }
.tab { width: 28.750px; height: 25px; flex: none; display: flex; align-items: center; justify-content: flex-end; border-right: 1px solid #666; color: #fff; }
.tabs.first .tab { width: 28.700px; }
.narrow .tab { width: 27.500px; }
.tab.bare { border-right-color: transparent; }
.tab > * { width: 20px; height: 20px; opacity: .55; }
.tab.on > * { opacity: 1; }
.green { color: #12913a; }
.blue { color: #1f78c8; }
.orange { color: #ff8a1a; }
.wp { background: #080808; color: #fff; font: 700 14px/17px "Liberation Serif", serif; letter-spacing: -.5px; text-align: center; border-radius: 2px; }
.active { width: 38.500px; height: 40px; flex: none; background: #3b3b3b; border-radius: 9px 9px 0 0; display: flex; align-items: center; justify-content: center; }
.winctl { display: flex; margin-left: auto; }

/* address row */
.navbar { height: 48px; flex: none; display: flex; align-items: center; background: #3b3b3b; }
.lead7 { margin-left: 7px; }
.address { width: 1398px; height: 37px; margin-left: 8px; border-radius: 19px; background: #2b2b2b; display: flex; align-items: center; padding: 0 20px 0 24px; }
.url { flex: 1; margin-left: 20px; font: 17px/24px "Open Sans", sans-serif; letter-spacing: -.21px; color: #9a9a9a; white-space: nowrap; }
.url b { font-weight: 400; color: #fff; }
.read { margin-right: 28px; }
.navicons { display: flex; align-items: center; margin-left: 9px; }
.vline { width: 1px; height: 24px; background: #666; margin-left: 2px; }

/* page */
.viewport { position: relative; height: 938px; margin: 0 5px; flex: none; background: #fff; border-radius: 10px; overflow: hidden; display: flex; }
.app { width: 1891px; }
.scrollbar { width: 19px; background: #fcfcfc; display: flex; flex-direction: column; align-items: center; padding: 12px 0 10px; }
.thumb { width: 11px; height: 842px; border-radius: 6px; background: #8b8b8b; margin: 47px 0 10px; }
.appbar { height: 76px; margin-top: -38px; background: #3f51b5; color: #fff; display: flex; align-items: center; }
.chev { margin-left: 21px; }
.brand { width: 1286px; margin: -3px -54px 0 15px; font-weight: 500; font-size: 25px; white-space: nowrap; }
.sync, .user { margin-top: -2px; font-weight: 500; font-size: 17.500px; white-space: nowrap; }
.sync { width: 38px; margin-left: 20px; }
.ring { margin-left: 7px; }
.user { width: 140px; margin-left: 43px; margin-right: 6px; }

.titlebar { height: 109px; margin: 0 37px 0 38px; border-bottom: 1px solid #e0e0e0; display: flex; align-items: center; padding-top: 23px; }
h1 { flex: 1; margin-top: -7px; font-size: 42.500px; line-height: 52px; white-space: nowrap; color: #000; }
h1 span { color: #a3aab1; }
.btn { font: 500 17.500px/20px Roboto, sans-serif; color: #3f51b5; background: #fff; border: 1px solid #e0e0e0; border-radius: 5px; padding: 0; height: 44px; flex: none; }
.edit { width: 80px; padding-right: 10px; margin-right: 12px; }
.new { width: 121px; margin-right: 7px; }

.columns { display: flex; }
.issue { margin-left: 50px; width: 1501px; }
h2 { font-weight: 500; font-size: 25px; line-height: 30px; margin: 18px 0 24px; }
.card { border: 1px solid #bccde6; border-radius: 5px; height: 613px; display: flex; flex-direction: column; }
.cardhead { height: 57px; flex: none; background: #f1f8ff; border-bottom: 1px solid #bccde6; border-radius: 4px 4px 0 0; padding: 0 18px; font-size: 20px; line-height: 56px; color: #586069; }
.mdtabs { height: 61px; flex: none; display: flex; border-bottom: 1px solid #e0e0e0; }
.mdtab { width: 200px; height: 60px; line-height: 62px; text-align: center; font-weight: 500; font-size: 17.500px; color: #7d7d7d; }
.mdtab.sel { border-bottom: 2px solid #3f51b5; }
.tools { display: flex; gap: 20px; padding: 24px 0 14px 22px; }
.tools svg { width: 30px; height: 30px; fill: #ff4081; }
.editor { height: 310px; flex: none; margin: 0 12px 0 13px; border: 2px solid #3f51b5; border-radius: 6px; padding: 29px 13px 0 12px; }
.text { height: 231px; font-size: 20px; line-height: 22.400px; color: #1f1f1f; }
.text p { height: 22.400px; white-space: nowrap; }
.caret { border-left: 1px solid #3f51b5; }
.dash { height: 2px; background: repeating-linear-gradient(90deg, #3f51b5 0 6px, transparent 6px 10px); }
.err { font-size: 16.250px; line-height: 20px; margin-top: 6px; color: #b71c1c; }
.actions { margin-top: 45px; border-top: 1px solid #aaa; box-shadow: inset 0 2px 1px -1px #ddd; flex: 1; display: flex; justify-content: flex-end; align-items: flex-start; gap: 13px; padding: 11px 12px 0 0; }
.cancel { width: 93px; height: 45px; color: #f44336; padding-bottom: 2px; }
.save { width: 80px; height: 46px; }

aside { width: 265px; margin-left: 25px; }
h3 { font-size: 25px; font-weight: 500; line-height: 30px; }
aside svg { width: 26px; height: 26px; margin-left: auto; margin-right: 12px; }
.severity { height: 85px; border-bottom: 1px solid #e0e0e0; display: flex; align-items: center; padding-top: 11px; }
.severity svg { margin-top: -29px; }
.chip { border-radius: 4px; font-weight: 500; font-size: 20px; line-height: 31px; }
.high { width: 49px; height: 32px; background: #ff6666; text-align: center; margin-left: 6px; margin-top: 1px; }
.bugtype { height: 60px; display: flex; padding-top: 6px; }
.bugtype svg { margin-top: 3px; }
.func { display: block; width: 158px; height: 31px; background: #9900cc; color: #fff; text-align: center; }

.snack { position: absolute; left: 643px; top: 825px; width: 605px; height: 83px; border-radius: 5px; background: #323232; box-shadow: 0 4px 6px -1px rgba(0,0,0,.3), 0 8px 22px rgba(0,0,0,.2); display: flex; align-items: center; }
.snack p { width: 400px; margin-left: 41px; text-align: center; font-size: 20px; line-height: 24px; color: #b9b9b9; }
.snack b { width: 60px; margin-left: 52px; text-align: center; font-weight: 500; font-size: 17.500px; color: #ff4081; }

/* Windows taskbar */
.taskbar { height: 50px; margin-top: 4px; flex: none; display: flex; align-items: center; background: linear-gradient(90deg, #cfdade, #d6dbdd 45%, #d3d2d2 77%, #cdd7dc 90%, #cdd9df); font-family: "Open Sans", sans-serif; }
.find { width: 360px; height: 49px; background: #fff; border: 1px solid #bbb; display: flex; align-items: center; padding-left: 14px; flex: none; }
.find span { flex: 1; margin-left: 15px; font-size: 18px; letter-spacing: -.05px; color: #333; white-space: nowrap; }
.apps { display: flex; height: 50px; }
.app-ic { width: 62.100px; height: 50px; display: flex; align-items: center; justify-content: center; }
.run { background: linear-gradient(#0078d7, #0078d7) 50% 100% / 51px 3px no-repeat; }
.current { background: linear-gradient(#0078d7, #0078d7) 0 100% / 100% 3px no-repeat, linear-gradient(90deg, #eef1f2 56px, #c0c5c8 56px 57px, #dfe3e5 57px); }
.tray { margin-left: auto; display: flex; align-items: center; margin-right: 4px; border-right: 1px solid #aab2b6; height: 50px; }
.lang { width: 50px; text-align: center; font-size: 15px; }
.clock { width: 76px; display: flex; flex-direction: column; text-align: center; font-size: 15px; line-height: 23px; letter-spacing: -.2px; }
.note { width: 60px; margin-right: 5px; }
```
